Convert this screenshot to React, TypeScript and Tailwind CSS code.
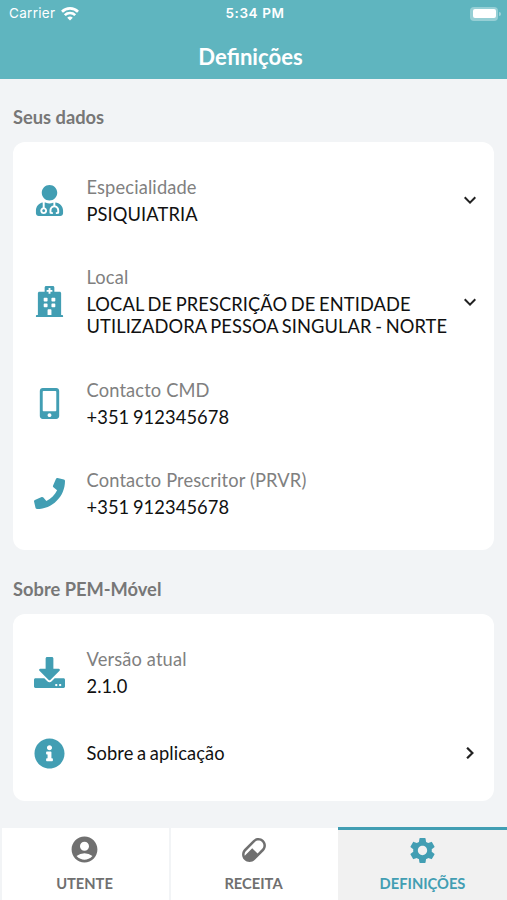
import type { ReactNode } from "react";
import { FaDownload, FaHospital, FaInfoCircle, FaMobileAlt, FaPhone, FaUserMd } from "react-icons/fa";
import { MdAccountCircle, MdSettings } from "react-icons/md";

type RowProps = {
  icon: ReactNode,
  label?: string,
  value: string,
  action?: ReactNode,
  className: string,
};

const Row = ({ icon, label, value, action, className }: RowProps) => (
  <div className={`flex items-center ${className}`}>
    <div className="flex w-[73.5px] shrink-0 justify-center text-[#429eb3]">{icon}</div>
    <div className="min-w-0 flex-1">
      {label && (
        <p className="mb-[5px] whitespace-nowrap text-[18.3px] leading-[22px] tracking-[0.14px] text-[#808080]">
          {label}
        </p>
      )}
      <p className="whitespace-pre text-[18.3px] leading-[22px] tracking-[0.1px] [word-spacing:-1.2px] text-[#111111]">
        {value}
      </p>
    </div>
    <div className="flex w-12 shrink-0 justify-center text-[#222222]">{action}</div>
  </div>
);

const ChevronDown = () => (
  <svg viewBox="0 0 12 8" className="h-[8px] w-[12px]" fill="none" stroke="currentColor" strokeWidth="2">
    <path d="m.7 1.3 5.3 5.3 5.3-5.3" />
  </svg>
);

const ChevronRight = () => (
  <svg viewBox="0 0 8 12" className="h-[12px] w-[8px]" fill="none" stroke="currentColor" strokeWidth="2.2">
    <path d="m1.1.7 5.3 5.3-5.3 5.3" />
  </svg>
);

const PillIcon = () => (
  <svg viewBox="0 0 24 24" className="size-[30px]" fill="currentColor">
    <path d="M4.22 11.29l7.07-7.07c2.35-2.34 6.14-2.34 8.49 0 2.34 2.34 2.34 6.14 0 8.49l-7.07 7.07c-2.35 2.34-6.14 2.34-8.49 0-2.34-2.35-2.34-6.14 0-8.49M5.64 12.71c-1.05 1.04-1.4 2.53-1.04 3.86l5.99-5.98 4.24 4.24 3.53-3.54c1.57-1.56 1.57-4.09 0-5.65-1.56-1.57-4.09-1.57-5.65 0z" />
  </svg>
);

const StatusBar = () => (
  <div className="grid h-[27px] grid-cols-3 items-center pl-[9px] pr-[6px] font-['Inter',sans-serif] text-[13.5px] text-white">
    <div className="flex items-center gap-[6px]">
      <span className="tracking-[0.3px]">Carrier</span>
      <svg viewBox="0 0 18 14" className="h-[14px] w-[18px]" fill="none" stroke="currentColor" strokeWidth="2.7">
        <path d="M1 4.7a11.4 11.4 0 0 1 16 0" />
        <path d="M3.8 8.1a7.5 7.5 0 0 1 10.4 0" />
        <path d="m6.2 10.8 2.8 2.8 2.8-2.8a4 4 0 0 0-5.6 0Z" fill="currentColor" stroke="none" />
      </svg>
    </div>
    <span className="text-center font-semibold tracking-[0.6px]">5:34 PM</span>
    <div className="flex items-center justify-end gap-px">
      <div className="h-[14px] w-[28px] rounded-[4px] bg-white/35 p-[2.5px]">
        <div className="h-full rounded-[2px] bg-white" />
      </div>
      <div className="h-[4px] w-[2px] rounded-r-full bg-white/40" />
    </div>
  </div>
);

export default function App() {
  return (
    <div className="flex h-[900px] w-[507px] flex-col overflow-hidden bg-[#f2f4f6] font-['Lato',sans-serif]">
      <header className="h-[79px] shrink-0 bg-[#5fb5bf]">
        <StatusBar />
        <h1 className="pr-[6px] pt-[15px] text-center text-[22.1px] font-bold leading-[30px] text-white">Definições</h1>
      </header>

      <main className="flex-1 px-[13px]">
        <h2 className="mt-[27px] text-[18.3px] font-bold leading-[22px] text-[#777777]">Seus dados</h2>
        <section className="mt-[14px] h-[408px] rounded-[12px] bg-white pt-[13px]">
          <Row
            className="h-[90px]"
            icon={<FaUserMd size={31} />}
            label="Especialidade"
            value="PSIQUIATRIA"
            action={<ChevronDown />}
          />
          <Row
            className="h-[113px]"
            icon={<FaHospital size={31} />}
            label="Local"
            value={"LOCAL DE PRESCRIÇÃO DE ENTIDADE\nUTILIZADORA PESSOA SINGULAR - NORTE"}
            action={<ChevronDown />}
          />
          <Row className="h-[90px]" icon={<FaMobileAlt size={31} />} label="Contacto CMD" value="+351 912345678" />
          <Row className="h-[90px]" icon={<FaPhone size={31} />} label="Contacto Prescritor (PRVR)" value="+351 912345678" />
        </section>

        <h2 className="mt-[28px] text-[18.3px] font-bold leading-[22px] text-[#777777]">Sobre PEM-Móvel</h2>
        <section className="mt-[14px] h-[187px] rounded-[12px] bg-white pt-[13px]">
          <Row className="h-[90px]" icon={<FaDownload size={31} />} label="Versão atual" value="2.1.0" />
          <Row
            className="h-[72px]"
            icon={<FaInfoCircle size={31} />}
            value="Sobre a aplicação"
            action={<ChevronRight />}
          />
        </section>
      </main>

      <nav className="grid h-[73px] shrink-0 grid-cols-3 text-[14.7px] font-bold leading-[18px] text-[#707070]">
        <div className="mt-px flex flex-col items-center border-l-2 border-[#f2f4f6] bg-white pr-[2px] pt-[6px]">
          <MdAccountCircle size={31} />
          <span className="mt-[9px]">UTENTE</span>
        </div>
        <div className="mt-px flex flex-col items-center border-l-2 border-[#f2f4f6] bg-white pr-[2px] pt-[7px]">
          <PillIcon />
          <span className="mt-[9px]">RECEITA</span>
        </div>
        <div className="flex flex-col items-center border-t-[3px] border-[#429eb3] bg-[#f1f1f1] pt-[5px] text-[#429eb3]">
          <MdSettings size={31} />
          <span className="mt-[8px]">DEFINIÇÕES</span>
        </div>
      </nav>
    </div>
  );
}
